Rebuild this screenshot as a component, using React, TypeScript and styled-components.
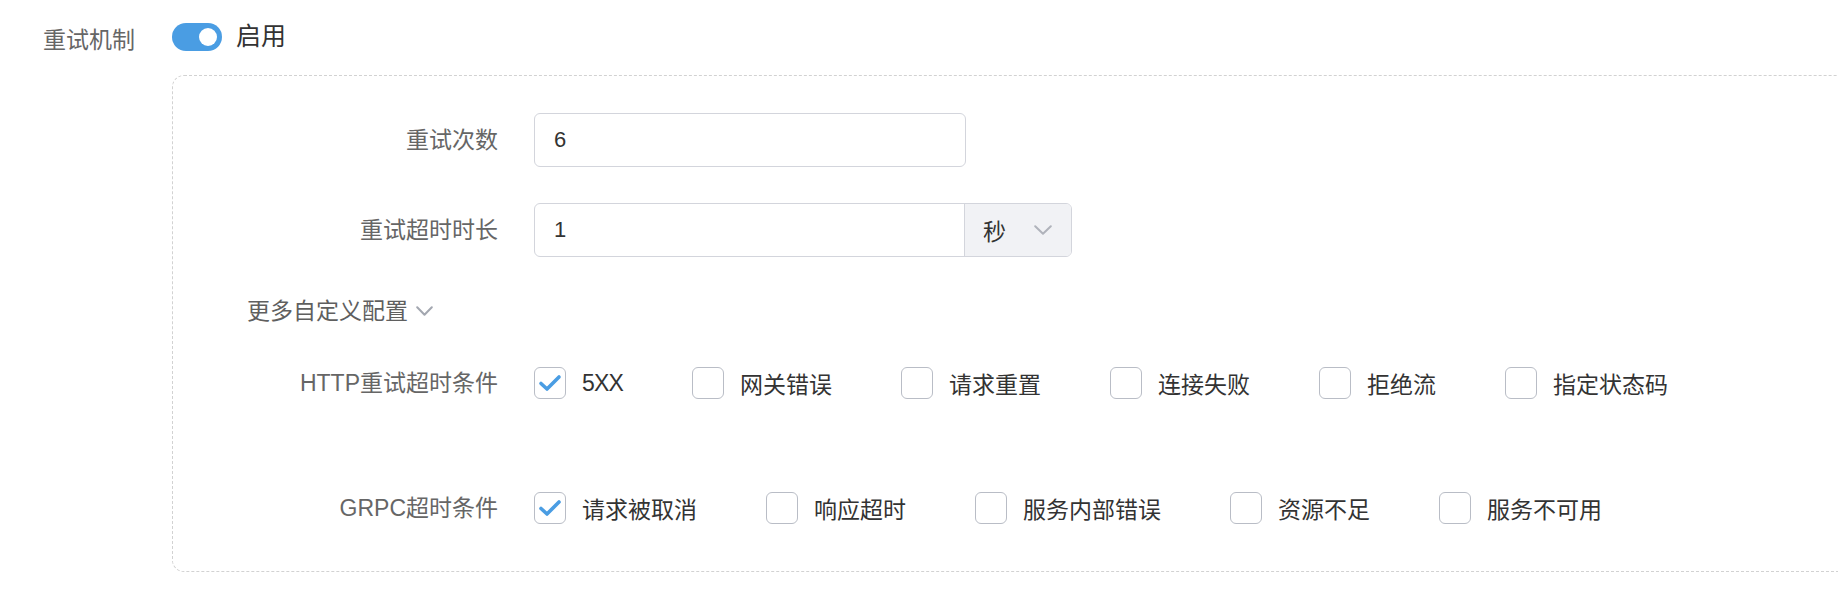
import React from "react";
import styled, { createGlobalStyle } from "styled-components";

const Global = createGlobalStyle`
  html, body {
    margin: 0;
    padding: 0;
    background: #ffffff;
    overflow: hidden;
  }
  body {
    font-family: "Liberation Sans", "Noto Sans CJK SC", sans-serif;
    color: #333333;
  }
`;

const Page = styled.div`
  padding-top: 23px;
  width: 1838px;
  height: 598px;
  box-sizing: border-box;
`;

const TopItem = styled.div`
  display: flex;
  align-items: flex-start;
  gap: 37px;
`;

const TopLabel = styled.div`
  width: 135px;
  flex: none;
  text-align: right;
  font-size: 23px;
  line-height: 28px;
  margin-top: 3px;
  color: #666666;
  white-space: nowrap;
`;

const TopControl = styled.div`
  flex: 1;
  display: flex;
  flex-direction: column;
  min-width: 0;
`;

const SwitchRow = styled.div`
  display: flex;
  align-items: center;
  height: 28px;
  gap: 14px;
`;

const Switch = styled.span<{ $on: boolean }>`
  position: relative;
  width: 50px;
  height: 28px;
  border-radius: 14px;
  background: ${(p) => (p.$on ? "#4a9de3" : "#d0d3da")};
  flex: none;
  &::after {
    content: "";
    position: absolute;
    top: 5px;
    ${(p) => (p.$on ? "right: 5px;" : "left: 5px;")}
    width: 18px;
    height: 18px;
    border-radius: 50%;
    background: #ffffff;
  }
`;

const SwitchText = styled.span`
  font-size: 25px;
  line-height: 28px;
  color: #333333;
  margin-top: -2px;
`;

const Panel = styled.div`
  margin-top: 24px;
  margin-right: -80px;
  border: 1px dashed #d2d2d2;
  border-radius: 12px;
  padding: 37px 0 36px 74px;
  display: flex;
  flex-direction: column;
`;

const FieldRow = styled.div<{ $gapTop?: number }>`
  display: flex;
  align-items: center;
  min-height: 54px;
  gap: 36px;
  margin-top: ${(p) => p.$gapTop ?? 0}px;
`;

const FieldLabel = styled.div`
  width: 251px;
  flex: none;
  text-align: right;
  font-size: 23px;
  line-height: 32px;
  color: #666666;
  white-space: nowrap;
`;

const InputBox = styled.div<{ $width: number }>`
  width: ${(p) => p.$width}px;
  height: 54px;
  box-sizing: border-box;
  border: 1px solid #d3d5dc;
  border-radius: 6px;
  display: flex;
  align-items: stretch;
  overflow: hidden;
  background: #ffffff;
`;

const InputValue = styled.div`
  flex: 1;
  display: flex;
  align-items: center;
  padding-left: 19px;
  font-size: 22px;
  color: #333333;
`;

const UnitSelect = styled.div`
  width: 107px;
  flex: none;
  box-sizing: border-box;
  border-left: 1px solid #d3d5dc;
  background: #f1f2f5;
  display: flex;
  align-items: center;
  justify-content: space-between;
  padding: 0 19px 0 18px;
  font-size: 23px;
  color: #333333;
`;

const MoreToggle = styled.div`
  margin-top: 38px;
  display: flex;
  align-items: center;
  gap: 8px;
  font-size: 23px;
  line-height: 32px;
  color: #5f5f5f;
`;

const OptionGroup = styled.div`
  display: flex;
  align-items: center;
  gap: 69px;
`;

const Option = styled.label`
  display: flex;
  align-items: center;
  gap: 16px;
  font-size: 23px;
  color: #333333;
  white-space: nowrap;
`;

const OptionText = styled.span<{ $latin?: boolean }>`
  letter-spacing: ${(p) => (p.$latin ? "-0.8px" : "0")};
`;

const Box = styled.span`
  width: 32px;
  height: 32px;
  box-sizing: border-box;
  border: 1px solid #b9bdc6;
  border-radius: 6px;
  background: #ffffff;
  display: flex;
  align-items: center;
  justify-content: center;
  flex: none;
`;

const Chevron = ({ color, w, h }: { color: string; w: number; h: number }) => (
  <svg width={w} height={h} viewBox={`0 0 ${w} ${h}`} fill="none">
    <polyline
      points={`1.2,1.2 ${w / 2},${h - 1.2} ${w - 1.2},1.2`}
      stroke={color}
      strokeWidth="2"
      strokeLinecap="round"
      strokeLinejoin="round"
    />
  </svg>
);

const Check = ({ checked }: { checked: boolean }) => (
  <Box>
    {checked && (
      <svg width="24" height="18" viewBox="0 0 24 18" fill="none">
        <path
          d="M3 9.5 L9 15 L21 3"
          stroke="#4a9de3"
          strokeWidth="3.6"
          strokeLinecap="round"
          strokeLinejoin="round"
        />
      </svg>
    )}
  </Box>
);

const httpOptions = [
  { label: "5XX", checked: true, latin: true },
  { label: "网关错误", checked: false },
  { label: "请求重置", checked: false },
  { label: "连接失败", checked: false },
  { label: "拒绝流", checked: false },
  { label: "指定状态码", checked: false },
];

const grpcOptions = [
  { label: "请求被取消", checked: true },
  { label: "响应超时", checked: false },
  { label: "服务内部错误", checked: false },
  { label: "资源不足", checked: false },
  { label: "服务不可用", checked: false },
];

export default function App() {
  return (
    <Page>
      <Global />
      <TopItem>
        <TopLabel>重试机制</TopLabel>
        <TopControl>
          <SwitchRow>
            <Switch $on={true} />
            <SwitchText>启用</SwitchText>
          </SwitchRow>
          <Panel>
            <FieldRow>
              <FieldLabel>重试次数</FieldLabel>
              <InputBox $width={432}>
                <InputValue>6</InputValue>
              </InputBox>
            </FieldRow>
            <FieldRow $gapTop={36}>
              <FieldLabel>重试超时时长</FieldLabel>
              <InputBox $width={538}>
                <InputValue>1</InputValue>
                <UnitSelect>
                  <span>秒</span>
                  <Chevron color="#b0b3bb" w={18} h={10} />
                </UnitSelect>
              </InputBox>
            </FieldRow>
            <MoreToggle>
              <span>更多自定义配置</span>
              <Chevron color="#a3a7b0" w={17} h={10} />
            </MoreToggle>
            <FieldRow $gapTop={29}>
              <FieldLabel>HTTP重试超时条件</FieldLabel>
              <OptionGroup>
                {httpOptions.map((o) => (
                  <Option key={o.label}>
                    <Check checked={o.checked} />
                    <OptionText $latin={o.latin}>{o.label}</OptionText>
                  </Option>
                ))}
              </OptionGroup>
            </FieldRow>
            <FieldRow $gapTop={71}>
              <FieldLabel>GRPC超时条件</FieldLabel>
              <OptionGroup>
                {grpcOptions.map((o) => (
                  <Option key={o.label}>
                    <Check checked={o.checked} />
                    <OptionText>{o.label}</OptionText>
                  </Option>
                ))}
              </OptionGroup>
            </FieldRow>
          </Panel>
        </TopControl>
      </TopItem>
    </Page>
  );
}
